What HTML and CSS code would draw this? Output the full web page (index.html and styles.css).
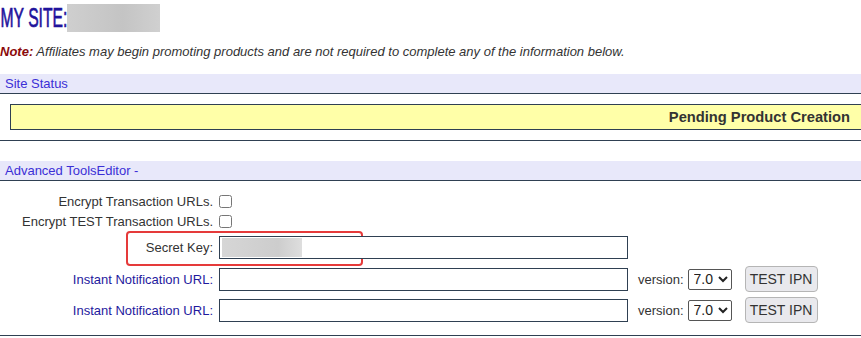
FILE: index.html
```html
<!DOCTYPE html>
<html lang="en">
  <head>
    <meta charset="UTF-8" />
    <meta name="viewport" content="width=device-width, initial-scale=1.0" />
    <title>My Site</title>
    <link rel="stylesheet" href="styles.css">
  </head>
  <body>
    <div class="page">
      <h1 class="site-title"><span class="title-text">MY SITE:</span><span class="blur blur-title"></span></h1>
      <p class="note">
        <b>Note:</b> Affiliates may begin promoting products and are not required to complete any of the information below.
      </p>

      <div class="section">
        <div class="section-head">Site Status</div>
        <div class="status-body">
          <div class="status-box">Pending Product Creation</div>
        </div>
      </div>

      <div class="section">
        <div class="section-head">Advanced ToolsEditor -</div>
        <form class="tools">
          <div class="row row-check">
            <label for="enc">Encrypt Transaction URLs.</label>
            <input type="checkbox" id="enc" />
          </div>
          <div class="row row-check">
            <label for="encTest">Encrypt TEST Transaction URLs.</label>
            <input type="checkbox" id="encTest" />
          </div>
          <div class="row row-secret">
            <span class="highlight"></span>
            <label for="secret">Secret Key:</label>
            <div class="secret-wrap">
              <input type="text" id="secret" class="text-field" />
              <span class="blur blur-key"></span>
            </div>
          </div>
          <div class="row row-ipn">
            <label for="ipn1" class="link-label">Instant Notification URL:</label>
            <input type="text" id="ipn1" class="text-field" />
            <span class="version">version:</span>
            <select class="version-select">
              <option>7.0</option>
            </select>
            <button type="button" class="btn-test">TEST IPN</button>
          </div>
          <div class="row row-ipn">
            <label for="ipn2" class="link-label">Instant Notification URL:</label>
            <input type="text" id="ipn2" class="text-field" />
            <span class="version">version:</span>
            <select class="version-select">
              <option>7.0</option>
            </select>
            <button type="button" class="btn-test">TEST IPN</button>
          </div>
        </form>
      </div>
    </div>
  </body>
</html>
```

FILE: styles.css
```css
/* General styles */
html,
body {
  margin: 0;
  padding: 0;
  overflow: hidden;
}

body {
  font-family: "Liberation Sans", Arial, sans-serif;
  font-size: 13px;
  color: #333;
  background-color: white;
}

.site-title {
  margin: 0;
  padding-top: 4px;
  height: 28px;
  display: flex;
  align-items: center;
  font-family: "Liberation Sans", sans-serif;
  font-weight: normal;
  font-size: 28px;
  line-height: 28px;
  color: #1f139c;
}

.title-text {
  display: inline-block;
  width: 67px;
  min-width: 0;
  flex: 0 0 67px;
  padding-left: 1px;
  box-sizing: border-box;
  white-space: nowrap;
  transform: scaleX(0.56);
  transform-origin: left center;
  -webkit-text-stroke: 0.7px #1f139c;
}

.blur {
  display: inline-block;
  background: linear-gradient(90deg, #cfcfcf, #c4c4c4 60%, #d0d0d0);
}

.blur-title {
  flex: 0 0 93px;
  height: 28px;
}

.note {
  margin: 12px 0 0;
  line-height: 16px;
  font-style: italic;
}

.note b {
  color: #8b0a0a;
}

/* Sections */
.section {
  margin-top: 14px;
  border-bottom: 1px solid #2f4052;
}

.section + .section {
  margin-top: 20px;
}

.section-head {
  height: 19px;
  line-height: 19px;
  padding: 0 5px;
  background-color: #e8e8fa;
  color: #3b2fd6;
  border-bottom: 1px solid #2f4052;
}

.status-body {
  padding: 10px 0 10px 10px;
}

.status-box {
  margin-right: -10px;
  height: 24px;
  line-height: 24px;
  padding-right: 20px;
  text-align: right;
  font-weight: bold;
  font-size: 14.7px;
  background-color: #ffffa8;
  border: 1px solid #2f4052;
}

/* Advanced tools form */
.tools {
  padding: 10px 0 12px;
}

.row {
  display: flex;
  align-items: center;
}

.row label {
  width: 213px;
  text-align: right;
  margin-right: 6px;
  flex-shrink: 0;
}

.row-check {
  height: 20px;
}

.row-check input {
  margin: 0;
  width: 13px;
  height: 13px;
}

.row-secret {
  position: relative;
  margin-top: 5px;
}

.row-ipn {
  margin-top: 5px;
}

.row-secret + .row-ipn {
  margin-top: 7px;
}

.link-label {
  color: #1f1a9e;
}

.text-field {
  box-sizing: border-box;
  width: 409px;
  height: 23px;
  margin: 0;
  border: 1px solid #2f4052;
  padding: 2px 4px;
  font-family: inherit;
  font-size: 13px;
}

.secret-wrap {
  position: relative;
  display: flex;
}

.blur-key {
  position: absolute;
  left: 3px;
  top: 2px;
  width: 80px;
  height: 19px;
  background: linear-gradient(90deg, #d6d6d6, #cdcdcd 70%, #dedede);
}

.highlight {
  position: absolute;
  left: 126px;
  top: -5px;
  width: 233px;
  height: 31px;
  border: 2px solid #e53a3a;
  border-radius: 4px;
}

.version {
  margin-left: 10px;
  margin-right: 4px;
}

.version-select {
  height: 21px;
  width: 44px;
  font-family: inherit;
  font-size: 14px;
  border: 1px solid #555;
  border-radius: 2px;
  padding: 0 0 0 1px;
  background-color: white;
  color: #222;
}

.btn-test {
  margin-left: 13px;
  width: 73px;
  height: 26px;
  padding: 0;
  font-family: inherit;
  font-size: 14px;
  color: #333;
  background-color: #e9e9ed;
  border: 1px solid #b5b5b5;
  border-radius: 4px;
  cursor: pointer;
}
```
